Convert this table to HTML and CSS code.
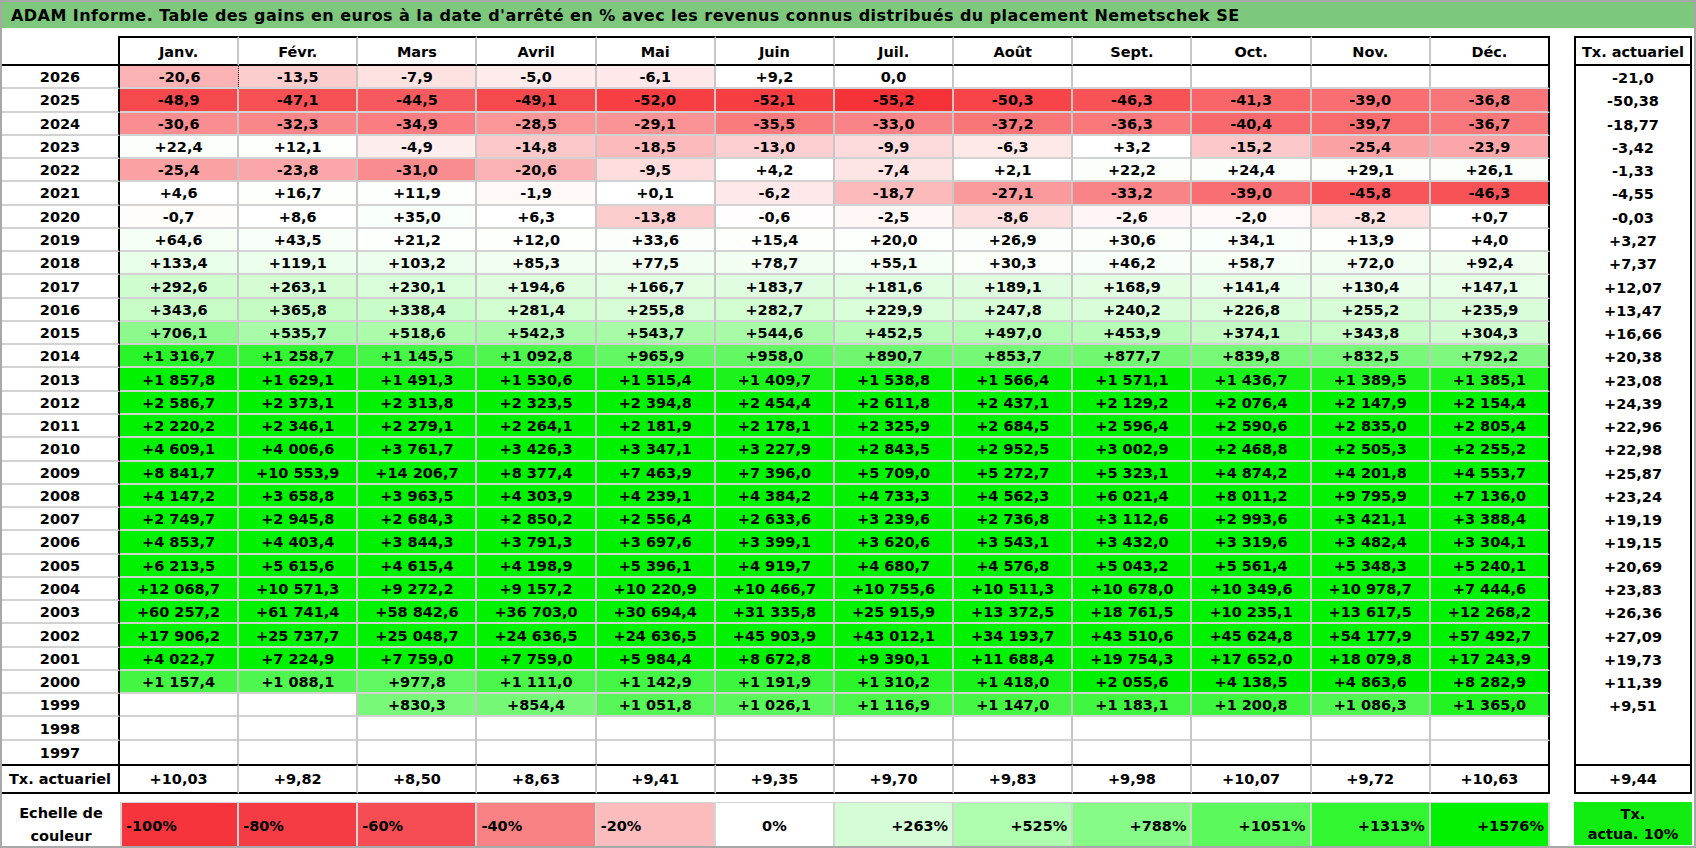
FILE: index.html
```html
<!DOCTYPE html>
<html lang="fr">
<head>
<meta charset="utf-8">
<title>ADAM Informe</title>
<link rel="stylesheet" href="styles.css">
</head>
<body>
<div class="page">
  <div class="title">ADAM Informe. Table des gains en euros à la date d'arrêté en % avec les revenus connus distribués du placement Nemetschek SE</div>
  <div class="main">
    <div class="grid">
      <div class="corner"></div><div class="hd">Janv.</div><div class="hd">Févr.</div><div class="hd">Mars</div><div class="hd">Avril</div><div class="hd">Mai</div><div class="hd">Juin</div><div class="hd">Juil.</div><div class="hd">Août</div><div class="hd">Sept.</div><div class="hd">Oct.</div><div class="hd">Nov.</div><div class="hd">Déc.</div>
      <div class="yr">2026</div><div class="c dot">-20,6</div><div class="c">-13,5</div><div class="c">-7,9</div><div class="c">-5,0</div><div class="c">-6,1</div><div class="c">+9,2</div><div class="c">0,0</div><div class="c"></div><div class="c"></div><div class="c"></div><div class="c"></div><div class="c"></div>
      <div class="yr">2025</div><div class="c">-48,9</div><div class="c">-47,1</div><div class="c">-44,5</div><div class="c">-49,1</div><div class="c">-52,0</div><div class="c">-52,1</div><div class="c">-55,2</div><div class="c">-50,3</div><div class="c">-46,3</div><div class="c">-41,3</div><div class="c">-39,0</div><div class="c">-36,8</div>
      <div class="yr">2024</div><div class="c">-30,6</div><div class="c">-32,3</div><div class="c">-34,9</div><div class="c">-28,5</div><div class="c">-29,1</div><div class="c">-35,5</div><div class="c">-33,0</div><div class="c">-37,2</div><div class="c">-36,3</div><div class="c">-40,4</div><div class="c">-39,7</div><div class="c">-36,7</div>
      <div class="yr">2023</div><div class="c">+22,4</div><div class="c">+12,1</div><div class="c">-4,9</div><div class="c">-14,8</div><div class="c">-18,5</div><div class="c">-13,0</div><div class="c">-9,9</div><div class="c">-6,3</div><div class="c">+3,2</div><div class="c">-15,2</div><div class="c">-25,4</div><div class="c">-23,9</div>
      <div class="yr">2022</div><div class="c">-25,4</div><div class="c">-23,8</div><div class="c">-31,0</div><div class="c">-20,6</div><div class="c">-9,5</div><div class="c">+4,2</div><div class="c">-7,4</div><div class="c">+2,1</div><div class="c">+22,2</div><div class="c">+24,4</div><div class="c">+29,1</div><div class="c">+26,1</div>
      <div class="yr">2021</div><div class="c">+4,6</div><div class="c">+16,7</div><div class="c">+11,9</div><div class="c">-1,9</div><div class="c">+0,1</div><div class="c">-6,2</div><div class="c">-18,7</div><div class="c">-27,1</div><div class="c">-33,2</div><div class="c">-39,0</div><div class="c">-45,8</div><div class="c">-46,3</div>
      <div class="yr">2020</div><div class="c">-0,7</div><div class="c">+8,6</div><div class="c">+35,0</div><div class="c">+6,3</div><div class="c">-13,8</div><div class="c">-0,6</div><div class="c">-2,5</div><div class="c">-8,6</div><div class="c">-2,6</div><div class="c">-2,0</div><div class="c">-8,2</div><div class="c">+0,7</div>
      <div class="yr">2019</div><div class="c">+64,6</div><div class="c">+43,5</div><div class="c">+21,2</div><div class="c">+12,0</div><div class="c">+33,6</div><div class="c">+15,4</div><div class="c">+20,0</div><div class="c">+26,9</div><div class="c">+30,6</div><div class="c">+34,1</div><div class="c">+13,9</div><div class="c">+4,0</div>
      <div class="yr">2018</div><div class="c">+133,4</div><div class="c">+119,1</div><div class="c">+103,2</div><div class="c">+85,3</div><div class="c">+77,5</div><div class="c">+78,7</div><div class="c">+55,1</div><div class="c">+30,3</div><div class="c">+46,2</div><div class="c">+58,7</div><div class="c">+72,0</div><div class="c">+92,4</div>
      <div class="yr">2017</div><div class="c">+292,6</div><div class="c">+263,1</div><div class="c">+230,1</div><div class="c">+194,6</div><div class="c">+166,7</div><div class="c">+183,7</div><div class="c">+181,6</div><div class="c">+189,1</div><div class="c">+168,9</div><div class="c">+141,4</div><div class="c">+130,4</div><div class="c">+147,1</div>
      <div class="yr">2016</div><div class="c">+343,6</div><div class="c">+365,8</div><div class="c">+338,4</div><div class="c">+281,4</div><div class="c">+255,8</div><div class="c">+282,7</div><div class="c">+229,9</div><div class="c">+247,8</div><div class="c">+240,2</div><div class="c">+226,8</div><div class="c">+255,2</div><div class="c">+235,9</div>
      <div class="yr">2015</div><div class="c">+706,1</div><div class="c">+535,7</div><div class="c">+518,6</div><div class="c">+542,3</div><div class="c">+543,7</div><div class="c">+544,6</div><div class="c">+452,5</div><div class="c">+497,0</div><div class="c">+453,9</div><div class="c">+374,1</div><div class="c">+343,8</div><div class="c">+304,3</div>
      <div class="yr">2014</div><div class="c">+1 316,7</div><div class="c">+1 258,7</div><div class="c">+1 145,5</div><div class="c">+1 092,8</div><div class="c">+965,9</div><div class="c">+958,0</div><div class="c">+890,7</div><div class="c">+853,7</div><div class="c">+877,7</div><div class="c">+839,8</div><div class="c">+832,5</div><div class="c">+792,2</div>
      <div class="yr">2013</div><div class="c">+1 857,8</div><div class="c">+1 629,1</div><div class="c">+1 491,3</div><div class="c">+1 530,6</div><div class="c">+1 515,4</div><div class="c">+1 409,7</div><div class="c">+1 538,8</div><div class="c">+1 566,4</div><div class="c">+1 571,1</div><div class="c">+1 436,7</div><div class="c">+1 389,5</div><div class="c">+1 385,1</div>
      <div class="yr">2012</div><div class="c">+2 586,7</div><div class="c">+2 373,1</div><div class="c">+2 313,8</div><div class="c">+2 323,5</div><div class="c">+2 394,8</div><div class="c">+2 454,4</div><div class="c">+2 611,8</div><div class="c">+2 437,1</div><div class="c">+2 129,2</div><div class="c">+2 076,4</div><div class="c">+2 147,9</div><div class="c">+2 154,4</div>
      <div class="yr">2011</div><div class="c">+2 220,2</div><div class="c">+2 346,1</div><div class="c">+2 279,1</div><div class="c">+2 264,1</div><div class="c">+2 181,9</div><div class="c">+2 178,1</div><div class="c">+2 325,9</div><div class="c">+2 684,5</div><div class="c">+2 596,4</div><div class="c">+2 590,6</div><div class="c">+2 835,0</div><div class="c">+2 805,4</div>
      <div class="yr">2010</div><div class="c">+4 609,1</div><div class="c">+4 006,6</div><div class="c">+3 761,7</div><div class="c">+3 426,3</div><div class="c">+3 347,1</div><div class="c">+3 227,9</div><div class="c">+2 843,5</div><div class="c">+2 952,5</div><div class="c">+3 002,9</div><div class="c">+2 468,8</div><div class="c">+2 505,3</div><div class="c">+2 255,2</div>
      <div class="yr">2009</div><div class="c">+8 841,7</div><div class="c">+10 553,9</div><div class="c">+14 206,7</div><div class="c">+8 377,4</div><div class="c">+7 463,9</div><div class="c">+7 396,0</div><div class="c">+5 709,0</div><div class="c">+5 272,7</div><div class="c">+5 323,1</div><div class="c">+4 874,2</div><div class="c">+4 201,8</div><div class="c">+4 553,7</div>
      <div class="yr">2008</div><div class="c">+4 147,2</div><div class="c">+3 658,8</div><div class="c">+3 963,5</div><div class="c">+4 303,9</div><div class="c">+4 239,1</div><div class="c">+4 384,2</div><div class="c">+4 733,3</div><div class="c">+4 562,3</div><div class="c">+6 021,4</div><div class="c">+8 011,2</div><div class="c">+9 795,9</div><div class="c">+7 136,0</div>
      <div class="yr">2007</div><div class="c">+2 749,7</div><div class="c">+2 945,8</div><div class="c">+2 684,3</div><div class="c">+2 850,2</div><div class="c">+2 556,4</div><div class="c">+2 633,6</div><div class="c">+3 239,6</div><div class="c">+2 736,8</div><div class="c">+3 112,6</div><div class="c">+2 993,6</div><div class="c">+3 421,1</div><div class="c">+3 388,4</div>
      <div class="yr">2006</div><div class="c">+4 853,7</div><div class="c">+4 403,4</div><div class="c">+3 844,3</div><div class="c">+3 791,3</div><div class="c">+3 697,6</div><div class="c">+3 399,1</div><div class="c">+3 620,6</div><div class="c">+3 543,1</div><div class="c">+3 432,0</div><div class="c">+3 319,6</div><div class="c">+3 482,4</div><div class="c">+3 304,1</div>
      <div class="yr">2005</div><div class="c">+6 213,5</div><div class="c">+5 615,6</div><div class="c">+4 615,4</div><div class="c">+4 198,9</div><div class="c">+5 396,1</div><div class="c">+4 919,7</div><div class="c">+4 680,7</div><div class="c">+4 576,8</div><div class="c">+5 043,2</div><div class="c">+5 561,4</div><div class="c">+5 348,3</div><div class="c">+5 240,1</div>
      <div class="yr">2004</div><div class="c">+12 068,7</div><div class="c">+10 571,3</div><div class="c">+9 272,2</div><div class="c">+9 157,2</div><div class="c">+10 220,9</div><div class="c">+10 466,7</div><div class="c">+10 755,6</div><div class="c">+10 511,3</div><div class="c">+10 678,0</div><div class="c">+10 349,6</div><div class="c">+10 978,7</div><div class="c">+7 444,6</div>
      <div class="yr">2003</div><div class="c">+60 257,2</div><div class="c">+61 741,4</div><div class="c">+58 842,6</div><div class="c">+36 703,0</div><div class="c">+30 694,4</div><div class="c">+31 335,8</div><div class="c">+25 915,9</div><div class="c">+13 372,5</div><div class="c">+18 761,5</div><div class="c">+10 235,1</div><div class="c">+13 617,5</div><div class="c">+12 268,2</div>
      <div class="yr">2002</div><div class="c">+17 906,2</div><div class="c">+25 737,7</div><div class="c">+25 048,7</div><div class="c">+24 636,5</div><div class="c">+24 636,5</div><div class="c">+45 903,9</div><div class="c">+43 012,1</div><div class="c">+34 193,7</div><div class="c">+43 510,6</div><div class="c">+45 624,8</div><div class="c">+54 177,9</div><div class="c">+57 492,7</div>
      <div class="yr">2001</div><div class="c">+4 022,7</div><div class="c">+7 224,9</div><div class="c">+7 759,0</div><div class="c">+7 759,0</div><div class="c">+5 984,4</div><div class="c">+8 672,8</div><div class="c">+9 390,1</div><div class="c">+11 688,4</div><div class="c">+19 754,3</div><div class="c">+17 652,0</div><div class="c">+18 079,8</div><div class="c">+17 243,9</div>
      <div class="yr">2000</div><div class="c">+1 157,4</div><div class="c">+1 088,1</div><div class="c">+977,8</div><div class="c">+1 111,0</div><div class="c">+1 142,9</div><div class="c">+1 191,9</div><div class="c">+1 310,2</div><div class="c">+1 418,0</div><div class="c">+2 055,6</div><div class="c">+4 138,5</div><div class="c">+4 863,6</div><div class="c">+8 282,9</div>
      <div class="yr">1999</div><div class="c"></div><div class="c"></div><div class="c">+830,3</div><div class="c">+854,4</div><div class="c">+1 051,8</div><div class="c">+1 026,1</div><div class="c">+1 116,9</div><div class="c">+1 147,0</div><div class="c">+1 183,1</div><div class="c">+1 200,8</div><div class="c">+1 086,3</div><div class="c">+1 365,0</div>
      <div class="yr">1998</div><div class="c"></div><div class="c"></div><div class="c"></div><div class="c"></div><div class="c"></div><div class="c"></div><div class="c"></div><div class="c"></div><div class="c"></div><div class="c"></div><div class="c"></div><div class="c"></div>
      <div class="yr">1997</div><div class="c"></div><div class="c"></div><div class="c"></div><div class="c"></div><div class="c"></div><div class="c"></div><div class="c"></div><div class="c"></div><div class="c"></div><div class="c"></div><div class="c"></div><div class="c"></div>
      <div class="yr ft">Tx. actuariel</div><div class="c ft">+10,03</div><div class="c ft">+9,82</div><div class="c ft">+8,50</div><div class="c ft">+8,63</div><div class="c ft">+9,41</div><div class="c ft">+9,35</div><div class="c ft">+9,70</div><div class="c ft">+9,83</div><div class="c ft">+9,98</div><div class="c ft">+10,07</div><div class="c ft">+9,72</div><div class="c ft">+10,63</div>
    </div>
    <div class="txcol">
      <div class="txhd">Tx. actuariel</div>
      <div class="txc">-21,0</div>
      <div class="txc">-50,38</div>
      <div class="txc">-18,77</div>
      <div class="txc">-3,42</div>
      <div class="txc">-1,33</div>
      <div class="txc">-4,55</div>
      <div class="txc">-0,03</div>
      <div class="txc">+3,27</div>
      <div class="txc">+7,37</div>
      <div class="txc">+12,07</div>
      <div class="txc">+13,47</div>
      <div class="txc">+16,66</div>
      <div class="txc">+20,38</div>
      <div class="txc">+23,08</div>
      <div class="txc">+24,39</div>
      <div class="txc">+22,96</div>
      <div class="txc">+22,98</div>
      <div class="txc">+25,87</div>
      <div class="txc">+23,24</div>
      <div class="txc">+19,19</div>
      <div class="txc">+19,15</div>
      <div class="txc">+20,69</div>
      <div class="txc">+23,83</div>
      <div class="txc">+26,36</div>
      <div class="txc">+27,09</div>
      <div class="txc">+19,73</div>
      <div class="txc">+11,39</div>
      <div class="txc">+9,51</div>
      <div class="txc"></div>
      <div class="txc"></div>
      <div class="txft">+9,44</div>
    </div>
  </div>
  <div class="legend">
    <div class="lgscale">
      <div class="lglabel">Echelle de<br>couleur</div>
      <div class="lg neg lg1">-100%</div>
      <div class="lg neg lg2">-80%</div>
      <div class="lg neg lg3">-60%</div>
      <div class="lg neg lg4">-40%</div>
      <div class="lg neg lg5">-20%</div>
      <div class="lg zero lg6">0%</div>
      <div class="lg pos lg7">+263%</div>
      <div class="lg pos lg8">+525%</div>
      <div class="lg pos lg9">+788%</div>
      <div class="lg pos lg10">+1051%</div>
      <div class="lg pos lg11">+1313%</div>
      <div class="lg pos lg12">+1576%</div>
    </div>
    <div class="lgtx">Tx.<br>actua. 10%</div>
  </div>
</div>
<script src="script.js"></script>
</body>
</html>
```

FILE: styles.css
```css
html, body {
  margin: 0;
  padding: 0;
  background: #ffffff;
}

body {
  font-family: "DejaVu Sans", "Liberation Sans", sans-serif;
  font-weight: bold;
  color: #000000;
}

.page {
  width: 1696px;
  height: 848px;
  box-sizing: border-box;
  border: 2px solid #a8a8a8;
  background: #ffffff;
  overflow: hidden;
}

.title {
  height: 26px;
  background: #7dc87d;
  font-size: 16px;
  line-height: 27px;
  padding-left: 9px;
  letter-spacing: 0.45px;
  white-space: nowrap;
}

.main {
  display: flex;
  gap: 24px;
  margin-top: 8px;
}

.grid {
  width: 1548px;
  display: grid;
  grid-template-columns: 118px repeat(12, 1fr);
  grid-template-rows: 30px repeat(30, 23.27px) 30px;
  font-size: 14.5px;
}

.grid > div {
  box-sizing: border-box;
  display: flex;
  align-items: center;
  justify-content: center;
  white-space: nowrap;
  padding-top: 1px;
}

.corner {
  border-right: 2px solid #000;
  border-bottom: 2px solid #000;
}

.grid > .hd {
  border-top: 2px solid #000;
  border-bottom: 2px solid #000;
  border-right: 2px solid #c6c6c6;
}

.yr {
  border-right: 2px solid #000;
  border-bottom: 2px solid #d2d2d2;
}

.c {
  border-right: 2px solid #c6c6c6;
  border-bottom: 2px solid #d2d2d2;
}

.grid > div:nth-child(13n) {
  border-right-color: #000;
}

.grid > .dot {
  border-right: 1px dotted #000;
  padding-left: 1px;
}

.grid > div:nth-last-child(n+14):nth-last-child(-n+26) {
  border-bottom: 0;
}

.grid > .ft {
  border-top: 2px solid #000;
  border-bottom: 2px solid #000;
}

.txcol {
  width: 118px;
  box-sizing: border-box;
  display: grid;
  grid-template-rows: 30px repeat(30, 23.27px) 30px;
  border-left: 2px solid #000;
  border-right: 2px solid #000;
  font-size: 14.5px;
}

.txcol > div {
  box-sizing: border-box;
  display: flex;
  align-items: center;
  justify-content: center;
  white-space: nowrap;
  padding-top: 1px;
}

.txhd,
.txft {
  border-top: 2px solid #000;
  border-bottom: 2px solid #000;
}

.legend {
  display: flex;
  gap: 24px;
  margin-top: 8px;
  height: 43px;
  font-size: 14.5px;
}

.lgscale {
  width: 1548px;
  display: grid;
  grid-template-columns: 118px repeat(12, 1fr);
}

.lglabel {
  display: flex;
  align-items: center;
  justify-content: center;
  text-align: center;
  line-height: 23px;
}

.lg {
  box-sizing: border-box;
  display: flex;
  align-items: center;
  border-top: 1px solid #d4d4d4;
  border-bottom: 1px solid #d4d4d4;
  border-right: 2px solid #d4d4d4;
  white-space: nowrap;
  padding-top: 2px;
}

.lg1 {
  border-left: 2px solid #d4d4d4;
}

.neg {
  justify-content: flex-start;
  padding-left: 4px;
}

.zero {
  justify-content: center;
}

.pos {
  justify-content: flex-end;
  padding-right: 4px;
}

.lg1 { background: #f5343c; }
.lg2 { background: #f53c44; }
.lg3 { background: #f64c54; }
.lg4 { background: #f88184; }
.lg5 { background: #fbbcbe; }
.lg6 { background: #ffffff; }
.lg7 { background: #d5fdd5; }
.lg8 { background: #aefcae; }
.lg9 { background: #86fb86; }
.lg10 { background: #5bf95b; }
.lg11 { background: #30f730; }
.lg12 { background: #00f200; }

.lgtx {
  width: 118px;
  background: #10ec10;
  display: flex;
  align-items: center;
  justify-content: center;
  text-align: center;
  line-height: 20px;
  padding-top: 2px;
  box-sizing: border-box;
}
```

FILE: script.js
```js
(function () {
  var cells = document.querySelectorAll('.grid .c:not(.ft)');
  cells.forEach(function (el) {
    var s = el.textContent.replace(/\s/g, '').replace(',', '.');
    if (!s) return;
    var v = parseFloat(s);
    if (isNaN(v) || v === 0) return;
    var r, g, b, t;
    if (v < 0) {
      t = Math.min(1, -v / 55.2);
      r = 255 + (245 - 255) * t;
      g = 255 + (50 - 255) * t;
      b = 255 + (55 - 255) * t;
    } else {
      t = Math.min(1, v / 1576);
      r = 255 * (1 - t);
      g = 255 + (242 - 255) * t;
      b = 255 * (1 - t);
    }
    el.style.background = 'rgb(' + Math.round(r) + ',' + Math.round(g) + ',' + Math.round(b) + ')';
  });
})();
```
